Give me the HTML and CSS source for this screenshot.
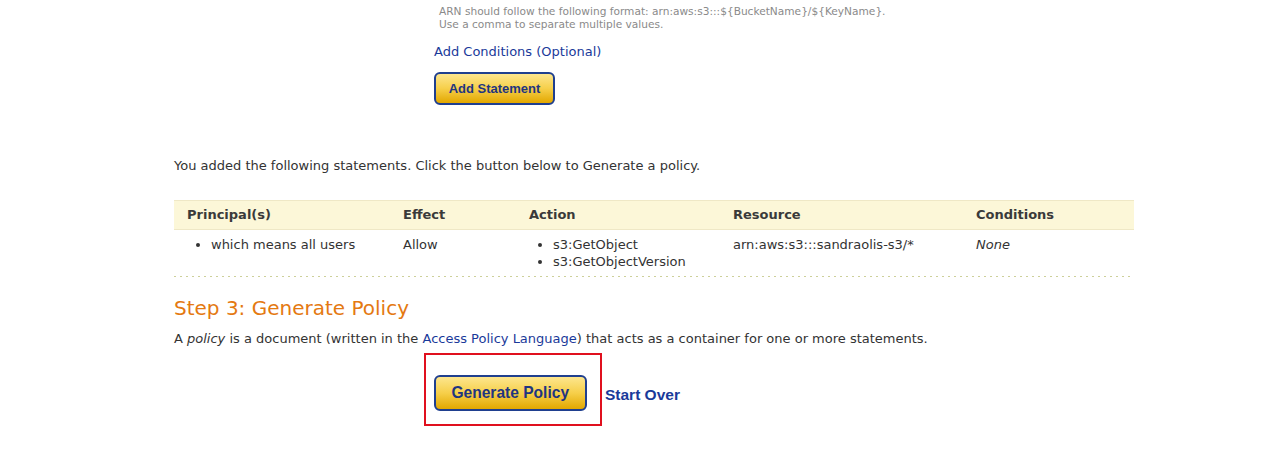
FILE: index.html
```html
<!DOCTYPE html>
<html>
<head>
<meta charset="utf-8">
<title>AWS Policy Generator</title>
<link rel="stylesheet" href="styles.css">
</head>
<body>
<div class="page">
  <div class="form">
    <div class="hint">
      <div>ARN should follow the following format: arn:aws:s3:::${BucketName}/${KeyName}.</div>
      <div>Use a comma to separate multiple values.</div>
    </div>
    <a class="cond-link" href="#">Add Conditions (Optional)</a>
    <div class="btn-row">
      <button class="btn btn-small">Add Statement</button>
    </div>
  </div>

  <p class="added">You added the following statements. Click the button below to Generate a policy.</p>

  <table class="stmts">
    <thead>
      <tr>
        <th class="c-principal">Principal(s)</th>
        <th class="c-effect">Effect</th>
        <th class="c-action">Action</th>
        <th class="c-resource">Resource</th>
        <th class="c-cond">Conditions</th>
      </tr>
    </thead>
    <tbody>
      <tr>
        <td><ul class="list"><li>which means all users</li></ul></td>
        <td>Allow</td>
        <td><ul class="list"><li>s3:GetObject</li><li>s3:GetObjectVersion</li></ul></td>
        <td>arn:aws:s3:::sandraolis-s3/*</td>
        <td><em>None</em></td>
      </tr>
    </tbody>
  </table>
  <div class="dots"></div>

  <h2 class="step">Step 3: Generate Policy</h2>
  <p class="desc">A <em>policy</em> is a document (written in the <a href="#">Access Policy Language</a>) that acts as a container for one or more statements.</p>

  <div class="gen-row">
    <div class="highlight">
      <button class="btn btn-large"><span class="btn-label">Generate Policy</span></button>
    </div>
    <a class="start-over" href="#">Start Over</a>
  </div>
</div>
</body>
</html>
```

FILE: styles.css
```css
html, body {
  margin: 0;
  padding: 0;
  background: #ffffff;
}

body {
  font-family: "DejaVu Sans", Verdana, sans-serif;
  font-size: 13px;
  color: #333333;
}

a {
  color: #1a3a9a;
  text-decoration: none;
}

.page {
  width: 960px;
  padding-left: 174px;
}

.form {
  padding-left: 260px;
}

.hint {
  padding-top: 5px;
  padding-left: 5px;
  font-size: 10.6px;
  line-height: 13px;
  color: #8a8a8a;
}

.cond-link {
  display: block;
  margin-top: 13px;
  font-size: 13px;
  line-height: 16px;
}

.btn-row {
  margin-top: 12px;
}

.btn {
  display: block;
  border: 2px solid #1f3f8f;
  border-radius: 6px;
  background: linear-gradient(to bottom, #fde68e 0%, #f6cf4a 50%, #e2a700 100%);
  color: #1f3580;
  font-family: "Liberation Sans", Arial, sans-serif;
  font-weight: bold;
  padding: 0;
  cursor: pointer;
}

.btn-small {
  width: 121px;
  height: 33px;
  font-size: 13px;
}

.btn-large {
  width: 153px;
  height: 36px;
  font-size: 17px;
}

.btn-label {
  display: inline-block;
  transform: scaleX(0.915);
}

.added {
  margin: 53px 0 0;
  line-height: 16px;
}

.stmts {
  margin-top: 26px;
  width: 960px;
  border-collapse: collapse;
  table-layout: fixed;
}

.stmts th {
  background: #fcf7d8;
  border-top: 1px solid #efe8c6;
  border-bottom: 1px solid #efe8c6;
  text-align: left;
  font-weight: bold;
  color: #3a3a3a;
  height: 28px;
  padding: 0 0 0 13px;
  line-height: 16px;
}

.stmts td {
  vertical-align: top;
  padding: 6px 0 6px 13px;
  line-height: 17px;
}

.c-principal { width: 203px; }
.c-effect { width: 113px; }
.c-action { width: 191px; }
.c-resource { width: 230px; }
.c-cond { width: 158px; }

.list {
  margin: 0;
  padding-left: 24px;
  list-style: disc;
}

.dots {
  height: 1px;
  width: 960px;
  background: repeating-linear-gradient(to right, #cdd09a 0, #cdd09a 2px, transparent 2px, transparent 6px);
}

.step {
  margin: 19px 0 0;
  font-size: 20px;
  line-height: 24px;
  font-weight: normal;
  color: #e47911;
}

.desc {
  margin: 11px 0 0;
  line-height: 16px;
}

.gen-row {
  display: flex;
  align-items: center;
  margin-top: 6px;
  margin-left: 250px;
}

.highlight {
  border: 2px solid #e0101e;
  padding: 20px 13px 13px 8px;
}

.start-over {
  margin-left: 3px;
  margin-top: 10px;
  font-family: "Liberation Sans", Arial, sans-serif;
  font-weight: bold;
  font-size: 15.5px;
  color: #1a3a9a;
}
```
